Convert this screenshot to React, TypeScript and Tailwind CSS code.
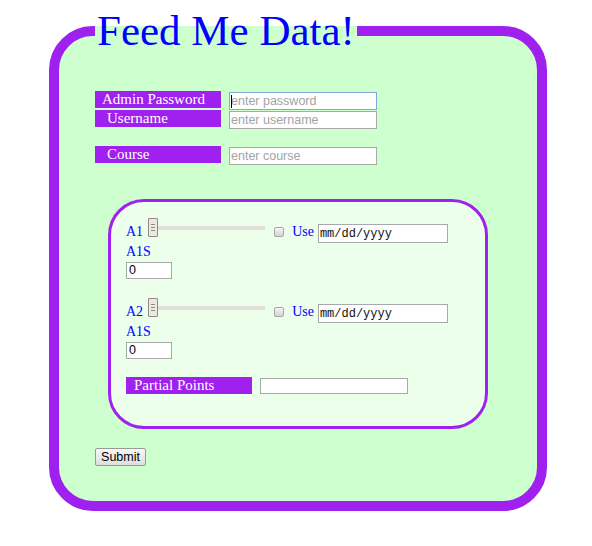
import React from "react";

const serif = "font-['Liberation_Serif','Times_New_Roman',serif]";
const sans = "font-['Liberation_Sans',Arial,sans-serif]";
const mono = "font-['Liberation_Mono','Courier_New',monospace]";

function Tag({ text, pad }: { text: string; pad: string }) {
  return (
    <div
      className={`h-[17px] w-[126px] shrink-0 bg-[#a020f0] text-[15px] leading-[17px] text-white whitespace-nowrap ${serif} ${pad}`}
    >
      {text}
    </div>
  );
}

function TextBox({
  placeholder,
  focused,
  h = "h-[18px]",
}: {
  placeholder?: string;
  focused?: boolean;
  h?: string;
}) {
  return (
    <div className="relative mt-[1px] ml-[8px]">
      <input
        placeholder={placeholder}
        className={`block w-[148px] ${h} border bg-white px-[1px] text-[12.5px] text-black outline-none placeholder:text-[#a3a3a3] ${sans} ${
          focused ? "border-[#7fa9d9]" : "border-[#a9a9a9]"
        }`}
      />
      {focused && (
        <div className="absolute left-[2px] top-[3px] h-[13px] w-px bg-black" />
      )}
    </div>
  );
}

function Slider() {
  return (
    <div className="ml-[5px] flex h-[19px] w-[117px] items-center">
      <div className="flex h-[19px] w-[10px] flex-col items-center justify-center gap-[2px] rounded-[1px] border border-[#8f8a84] bg-[#ece9e5]">
        <div className="h-px w-[4px] bg-[#8f8a84]" />
        <div className="h-px w-[4px] bg-[#8f8a84]" />
        <div className="h-px w-[4px] bg-[#8f8a84]" />
      </div>
      <div className="h-[4px] flex-1 bg-[#e2dfda]" />
    </div>
  );
}

function Block({ name }: { name: string }) {
  return (
    <div className="flex flex-col">
      <div className="flex h-[26px] items-start">
        <div className={`mt-[6px] h-[16px] text-[14px] leading-[16px] text-[#0000ff] ${serif}`}>
          {name}
        </div>
        <Slider />
        <div className="ml-[9px] mt-[9px] h-[10px] w-[10px] rounded-[2px] border border-[#a5a5a5] bg-linear-to-b from-[#f6f6f6] to-[#d4d4d4]" />
        <div className={`ml-[8px] mt-[6px] h-[16px] text-[14px] leading-[16px] text-[#0000ff] ${serif}`}>
          Use
        </div>
        <div
          className={`ml-[4px] mt-[6px] flex h-[19px] w-[130px] items-center border border-[#a9a9a9] bg-white pl-[1px] text-[12px] text-[#111] ${mono}`}
        >
          mm/dd/yyyy
        </div>
      </div>
      <div className={`h-[16px] text-[14px] leading-[16px] text-[#0000ff] ${serif}`}>A1S</div>
      <div
        className={`mt-[2px] flex h-[17px] w-[46px] items-center border border-[#a9a9a9] bg-white pl-[2px] text-[12.5px] text-black ${sans}`}
      >
        0
      </div>
    </div>
  );
}

export default function App() {
  return (
    <div className="min-h-[546px] bg-white pl-[49px] pt-[6px]">
      <fieldset className="m-0 w-[498px] min-w-0 rounded-[44px] border-[10px] border-[#a020f0] bg-[#ceffce] px-[36px] pb-[35px]">
        <legend
          className={`px-[2px] text-[43px] leading-[50px] text-[#0000ff] ${serif}`}
        >
          Feed Me Data!
        </legend>

        <div className="mt-[35px] flex flex-col">
          <div className="flex h-[19px] items-start">
            <Tag text="Admin Password" pad="pl-[7px]" />
            <TextBox placeholder="enter password" focused />
          </div>
          <div className="flex h-[19px] items-start">
            <Tag text="Username" pad="pl-[12px]" />
            <TextBox placeholder="enter username" />
          </div>
          <div className="mt-[17px] flex h-[19px] items-start">
            <Tag text="Course" pad="pl-[12px]" />
            <TextBox placeholder="enter course" />
          </div>
        </div>

        <fieldset className="m-0 ml-[13px] mt-[34px] w-[380px] min-w-0 rounded-[36px] border-[3px] border-[#a020f0] bg-[#ebffeb] pb-[32px] pl-[15px] pt-[16px]">
          <Block name="A1" />
          <div className="mt-[19px]">
            <Block name="A2" />
          </div>
          <div className="mt-[18px] flex h-[17px] items-start">
            <Tag text="Partial Points" pad="pl-[8px]" />
            <TextBox h="h-[16px]" />
          </div>
        </fieldset>

        <button
          className={`mt-[19px] block h-[18px] w-[51px] rounded-[2px] border border-[#9a9a9a] bg-linear-to-b from-[#f7f7f7] to-[#dedede] text-[12.5px] leading-[16px] text-black ${sans}`}
        >
          Submit
        </button>
      </fieldset>
    </div>
  );
}
